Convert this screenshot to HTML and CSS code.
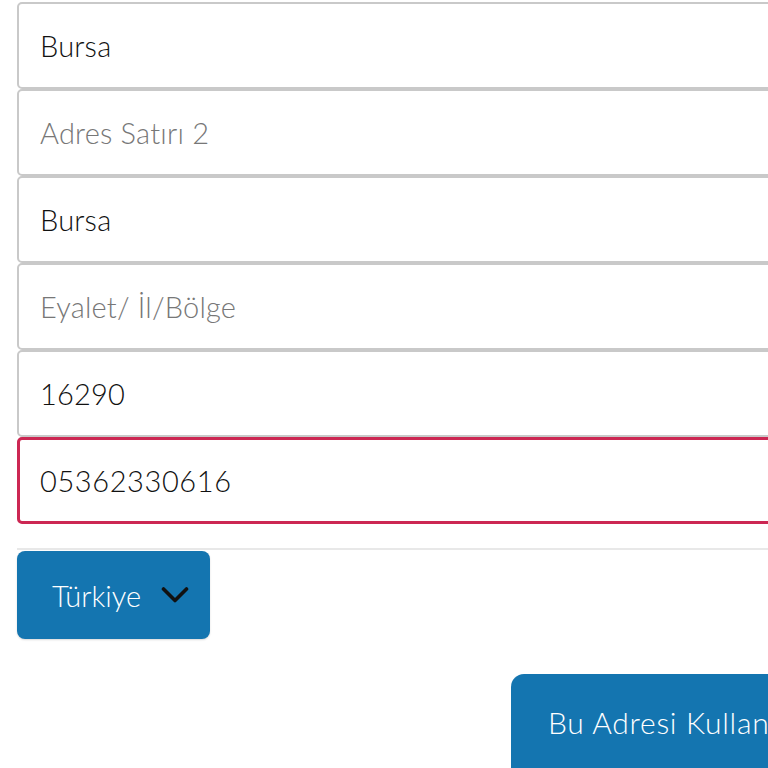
FILE: index.html
```html
<!DOCTYPE html>
<html lang="tr">
<head>
<meta charset="utf-8">
<link rel="stylesheet" href="styles.css">
</head>
<body>
<div class="page">
  <div class="form">
    <div class="field"><span class="value">Bursa</span></div>
    <div class="field"><span class="placeholder">Adres Satırı 2</span></div>
    <div class="field"><span class="value">Bursa</span></div>
    <div class="field"><span class="placeholder">Eyalet/ İl/Bölge</span></div>
    <div class="field"><span class="value">16290</span></div>
    <div class="field field-error"><span class="value">05362330616</span></div>
  </div>
  <div class="divider"></div>
  <button class="country">
    <span class="country-label">Türkiye</span>
    <svg class="chev" width="28" height="18" viewBox="0 0 28 18"><path d="M2.5 3 L14 14.5 L25.5 3" fill="none" stroke="#111" stroke-width="3.6" stroke-linecap="round" stroke-linejoin="round"/></svg>
  </button>
  <div class="actions">
    <button class="primary">Bu Adresi Kullan</button>
  </div>
</div>
</body>
</html>
```
FILE: styles.css
```css
html, body {
  margin: 0;
  padding: 0;
  background: #fff;
  overflow: hidden;
}
.page {
  width: 768px;
  height: 768px;
  overflow: hidden;
  padding-left: 17px;
  box-sizing: border-box;
  font-family: Lato, "Open Sans", sans-serif;
  font-weight: 300;
}
.form {
  display: flex;
  flex-direction: column;
  padding-top: 2px;
}
.field {
  width: 820px;
  height: 87px;
  box-sizing: border-box;
  border: 2px solid #c9c9c9;
  border-radius: 5px;
  display: flex;
  align-items: center;
  padding-left: 21px;
  font-size: 29px;
  letter-spacing: 0.2px;
}
.value { color: #111; }
.placeholder { color: #777; }
.field-error {
  border: 3px solid #cc2753;
  padding-left: 20px;
}
.field-error .value { letter-spacing: 0.6px; }
.divider {
  width: 820px;
  margin-top: 24px;
  border-top: 2px solid #e8e8e8;
}
.country {
  margin-top: 1px;
  width: 193px;
  height: 88px;
  border: none;
  border-radius: 8px;
  background: #1475b0;
  color: #fff;
  font-family: inherit;
  font-weight: 300;
  font-size: 29px;
  display: flex;
  align-items: center;
  padding: 0 0 0 35px;
  gap: 20px;
  box-shadow: 0 1px 2px rgba(0,0,0,0.15);
}
.chev { display: block; }
.actions {
  display: flex;
  margin-top: 35px;
  padding-left: 494px;
}
.primary {
  width: 320px;
  height: 110px;
  flex-shrink: 0;
  border: none;
  border-radius: 13px;
  background: #1475b0;
  color: #fff;
  font-family: inherit;
  font-weight: 300;
  font-size: 30px;
  letter-spacing: 0.7px;
  text-align: left;
  padding: 30px 0 0 37px;
  align-self: flex-start;
  display: flex;
  align-items: flex-start;
  box-sizing: border-box;
  white-space: nowrap;
}
```
